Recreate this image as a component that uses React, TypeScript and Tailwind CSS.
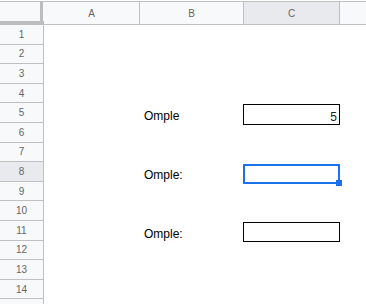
import React from 'react';

const ROWS = Array.from({ length: 14 }, (_, i) => i + 1);

function RowHeader({ n }: { n: number | null }) {
  return (
    <div
      className={`w-[44px] shrink-0 h-full flex items-center justify-center border-r border-b border-[#c0c0c0] text-[10px] text-[#666] ${
        n === 8 ? 'bg-[#e8eaed]' : 'bg-[#f8f9fa]'
      }`}
    >
      {n}
    </div>
  );
}

function BodyRow({ n }: { n: number }) {
  let label = '';
  let box: React.ReactNode = null;

  if (n === 5) {
    label = 'Omple';
    box = (
      <div className="mt-px h-[20.5px] w-[97px] border-[1.5px] border-black flex items-end justify-end pr-[2px] text-[12px] leading-[13px] text-[#222]">
        5
      </div>
    );
  } else if (n === 8) {
    label = 'Omple:';
    box = (
      <div className="relative mt-[1.5px] h-[20px] w-[97px] border-2 border-[#1a73e8]">
        <div className="absolute -right-[4px] -bottom-[4px] w-[6px] h-[6px] bg-[#1a73e8]" />
      </div>
    );
  } else if (n === 11) {
    label = 'Omple:';
    box = <div className="mt-px h-[20px] w-[97px] border-[1.5px] border-black" />;
  }

  return (
    <div className="flex h-[19.6px] shrink-0">
      <RowHeader n={n} />
      <div className="w-[96px] shrink-0" />
      <div className="w-[103px] shrink-0 flex items-end pl-[4px] pb-px text-[12px] leading-[12px] text-black">
        {label}
      </div>
      <div className="w-[97px] shrink-0 self-start">{box}</div>
      <div className="flex-1" />
    </div>
  );
}

export default function App() {
  return (
    <div
      className="w-[366px] h-[304px] overflow-hidden bg-white flex flex-col"
      style={{ fontFamily: '"Liberation Sans", Arial, sans-serif' }}
    >
      {/* column headers */}
      <div className="mt-px flex h-[24px] shrink-0 border-t border-[#c0c0c0]">
        <div className="w-[44px] shrink-0 flex flex-col bg-[#f8f9fa]">
          <div className="flex flex-1">
            <div className="flex-1" />
            <div className="w-[3px] bg-[#bdbdbd]" />
            <div className="w-px" />
          </div>
          <div className="h-[4px] bg-[#bdbdbd]" />
        </div>
        <div className="w-[96px] shrink-0 flex items-center justify-center bg-[#f8f9fa] border-r border-b border-[#c0c0c0] text-[10px] text-[#666]">
          A
        </div>
        <div className="w-[104px] shrink-0 flex items-center justify-center bg-[#f8f9fa] border-r border-b border-[#c0c0c0] text-[10px] text-[#666]">
          B
        </div>
        <div className="w-[96px] shrink-0 flex items-center justify-center bg-[#e8eaed] border-r border-b border-[#c0c0c0] text-[10px] text-[#666]">
          C
        </div>
        <div className="flex-1 bg-[#f8f9fa] border-b border-[#c0c0c0]" />
      </div>

      {ROWS.map((n) => (
        <BodyRow key={n} n={n} />
      ))}

      {/* partly visible next row */}
      <div className="flex h-[19.6px] shrink-0">
        <RowHeader n={null} />
      </div>
    </div>
  );
}
